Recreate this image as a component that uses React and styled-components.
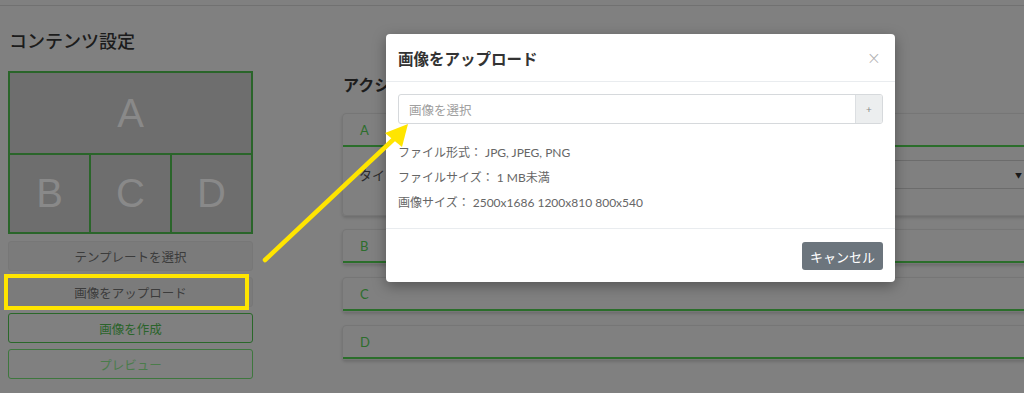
import React from 'react'
import styled, { createGlobalStyle } from 'styled-components'

const GlobalStyle = createGlobalStyle`
    html, body {
        margin: 0;
        padding: 0;
        background: #808080;
        overflow: hidden;
    }
    body {
        font-family: "Lato", "Noto Sans CJK JP", sans-serif;
        color: #1c1c1c;
    }
`;

const Screen = styled.div`
    position: relative;
    width: 1024px;
    height: 393px;
    overflow: hidden;
`;

const TopBar = styled.div`
    height: 5px;
    border-bottom: 1px solid #717171;
`;

const Content = styled.div`
    display: flex;
    gap: 89px;
    padding-left: 8px;
`;

/* left column */
const LeftCol = styled.div`
    width: 245px;
    flex-shrink: 0;
    display: flex;
    flex-direction: column;
`;

const PageTitle = styled.h2`
    margin: 23px 0 18px 1px;
    font-size: 18px;
    line-height: 24px;
    font-weight: 500;
    color: #1c1c1c;
`;

const Template = styled.div`
    display: grid;
    grid-template-columns: repeat(3, 1fr);
    grid-template-rows: 80px 77px;
    gap: 2px;
    padding: 2px;
    background: #2a652a;
`;

const Cell = styled.div`
    grid-column: ${p => p.$wide ? '1 / 4' : 'auto'};
    display: flex;
    align-items: center;
    justify-content: center;
    background: #6e6e6e;
    color: #898989;
    font-family: "Liberation Sans", sans-serif;
    font-size: 40px;
`;

const ButtonStack = styled.div`
    display: flex;
    flex-direction: column;
    gap: 6px;
    margin-top: 7px;
`;

const SideButton = styled.div`
    position: relative;
    height: 30px;
    box-sizing: border-box;
    display: flex;
    align-items: center;
    justify-content: center;
    border-radius: 3px;
    font-size: 12.5px;
    border: 1px solid ${p => p.$variant === 'light' ? '#777' : p.$variant === 'muted' ? '#3e773e' : '#2a682a'};
    background: ${p => p.$variant === 'light' ? '#7b7b7b' : 'transparent'};
    color: ${p => p.$variant === 'light' ? '#3c3c3c' : p.$variant === 'muted' ? '#4b7c4b' : '#2b642b'};
`;

const Highlight = styled.span`
    position: absolute;
    top: -4px;
    bottom: -4px;
    left: -5px;
    right: 3px;
    border: 4px solid #ffe500;
    pointer-events: none;
`;

/* right column */
const RightCol = styled.div`
    width: 720px;
    flex-shrink: 0;
    display: flex;
    flex-direction: column;
    gap: 13px;
`;

const SectionTitle = styled.h3`
    margin: 68px 0 4px 1px;
    font-size: 16px;
    line-height: 22px;
    font-weight: 700;
    color: #1c1c1c;
`;

const Card = styled.div`
    border: 1px solid #767676;
    border-radius: 4px;
    box-shadow: 0 2px 3px rgba(0, 0, 0, 0.15);
`;

const CardHeader = styled.div`
    height: 31px;
    display: flex;
    align-items: center;
    padding-left: 17px;
    border-bottom: 2px solid #2b6e2b;
    color: #2d6e2d;
    font-size: 13px;
`;

const CardBody = styled.div`
    display: flex;
    align-items: center;
    padding: 13px 16px 26px;
`;

const FieldLabel = styled.span`
    width: 85px;
    font-size: 13px;
    color: #2c2c2c;
`;

const Select = styled.div`
    flex: 1;
    height: 29px;
    box-sizing: border-box;
    border: 1px solid #6c6c6c;
    border-radius: 3px;
    display: flex;
    align-items: center;
    justify-content: flex-end;
    padding-right: 16px;
    margin-right: 6px;
    font-size: 7px;
    color: #1a1a1a;
`;

/* modal */
const Modal = styled.div`
    position: absolute;
    left: 386px;
    top: 34px;
    width: 509px;
    background: #fff;
    border-radius: 4px;
    box-shadow: 0 4px 14px rgba(0, 0, 0, 0.35);
    display: flex;
    flex-direction: column;
`;

const ModalHeader = styled.div`
    height: 47px;
    display: flex;
    align-items: center;
    justify-content: space-between;
    padding: 0 12px;
    border-bottom: 1px solid #e9ecef;
`;

const ModalTitle = styled.span`
    font-size: 15.5px;
    font-weight: 700;
    color: #333;
`;

const Close = styled.span`
    font-family: "DejaVu Sans", sans-serif;
    font-size: 17px;
    font-weight: 300;
    color: #b0b0b0;
    margin-right: 2px;
`;

const ModalBody = styled.div`
    padding: 12px 12px 13px;
`;

const InputGroup = styled.div`
    display: flex;
    height: 30px;
    box-sizing: border-box;
    border: 1px solid #d6d9dc;
    border-radius: 3px;
    overflow: hidden;
`;

const FileInput = styled.div`
    flex: 1;
    display: flex;
    align-items: center;
    padding-left: 10px;
    font-size: 12.5px;
    color: #a0a0a0;
`;

const Append = styled.div`
    width: 26px;
    display: flex;
    align-items: center;
    justify-content: center;
    background: #eceeef;
    border-left: 1px solid #dcdfe2;
    font-size: 10px;
    color: #8a8a8a;
`;

const InfoList = styled.div`
    margin-top: 16px;
`;

const InfoLine = styled.div`
    font-size: 12px;
    line-height: 25px;
    color: #666;
`;

const ModalFooter = styled.div`
    display: flex;
    justify-content: flex-end;
    padding: 13px 12px 12px;
    border-top: 1px solid #e9ecef;
`;

const CancelButton = styled.div`
    width: 81px;
    height: 28px;
    display: flex;
    align-items: center;
    justify-content: center;
    background: #6c757d;
    border-radius: 3px;
    color: #fff;
    font-size: 13px;
`;

const Annotation = styled.svg`
    position: absolute;
    left: 0;
    top: 0;
    pointer-events: none;
`;

const sections = ['A', 'B', 'C', 'D'];

export default function App() {
    return (
        <Screen>
            <GlobalStyle />
            <TopBar />
            <Content>
                <LeftCol>
                    <PageTitle>コンテンツ設定</PageTitle>
                    <Template>
                        <Cell $wide>A</Cell>
                        <Cell>B</Cell>
                        <Cell>C</Cell>
                        <Cell>D</Cell>
                    </Template>
                    <ButtonStack>
                        <SideButton $variant="light">テンプレートを選択</SideButton>
                        <SideButton $variant="light">
                            画像をアップロード
                            <Highlight />
                        </SideButton>
                        <SideButton $variant="green">画像を作成</SideButton>
                        <SideButton $variant="muted">プレビュー</SideButton>
                    </ButtonStack>
                </LeftCol>

                <RightCol>
                    <SectionTitle>アクション設定</SectionTitle>
                    {sections.map(s => (
                        <Card key={s}>
                            <CardHeader>{s}</CardHeader>
                            {s === 'A' && (
                                <CardBody>
                                    <FieldLabel>タイプ</FieldLabel>
                                    <Select>▼</Select>
                                </CardBody>
                            )}
                        </Card>
                    ))}
                </RightCol>
            </Content>

            <Modal>
                <ModalHeader>
                    <ModalTitle>画像をアップロード</ModalTitle>
                    <Close>×</Close>
                </ModalHeader>
                <ModalBody>
                    <InputGroup>
                        <FileInput>画像を選択</FileInput>
                        <Append>+</Append>
                    </InputGroup>
                    <InfoList>
                        <InfoLine>ファイル形式： JPG, JPEG, PNG</InfoLine>
                        <InfoLine>ファイルサイズ： 1 MB未満</InfoLine>
                        <InfoLine>画像サイズ： 2500x1686 1200x810 800x540</InfoLine>
                    </InfoList>
                </ModalBody>
                <ModalFooter>
                    <CancelButton>キャンセル</CancelButton>
                </ModalFooter>
            </Modal>

            {/* yellow arrow annotation */}
            <Annotation width="1024" height="393">
                <line x1="265" y1="260" x2="396" y2="137" stroke="#ffe500" strokeWidth="4.5" strokeLinecap="round" />
                <polygon points="408,124 385,133 402,147" fill="#ffe500" />
            </Annotation>
        </Screen>
    )
}
